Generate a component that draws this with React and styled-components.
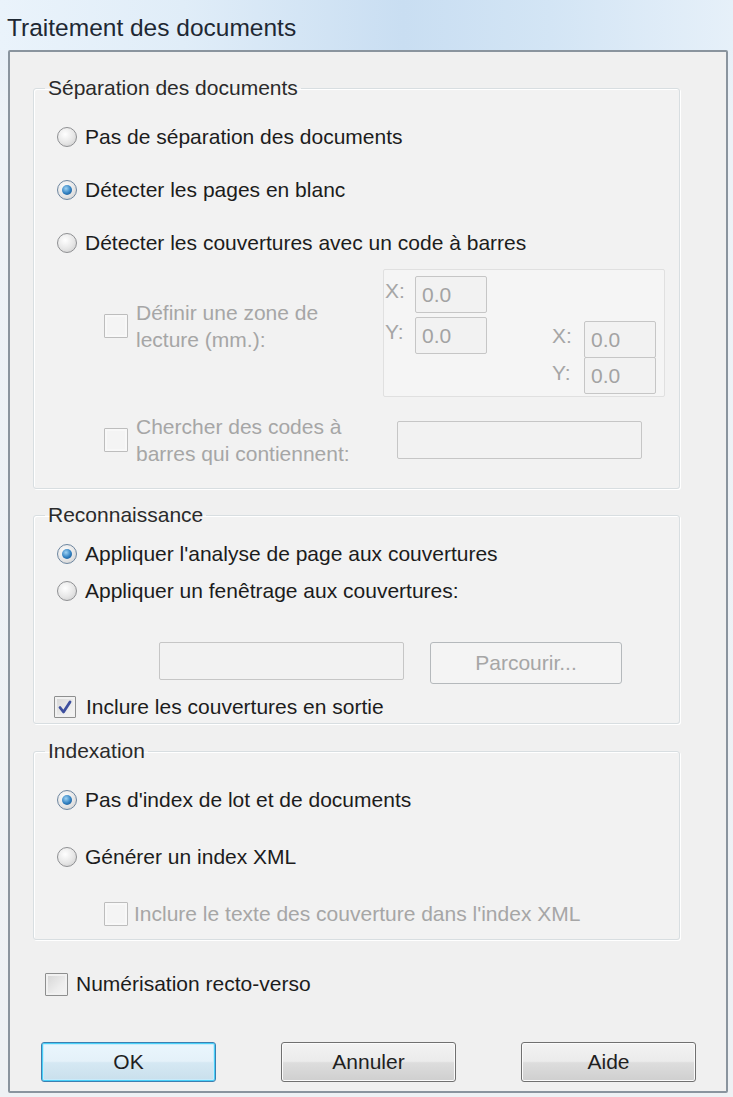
import React from 'react';
import styled, { createGlobalStyle, css } from 'styled-components';

const GlobalStyle = createGlobalStyle`
  html, body { margin: 0; padding: 0; }
  body {
    background: #eaf0f6;
    font-family: "Liberation Sans", Arial, sans-serif;
    color: #1c1c1c;
  }
`;

const Dialog = () => {
    return (
        <Window>
            <GlobalStyle />
            <TitleBar>Traitement des documents</TitleBar>
            <Frame>
                <Group>
                    <Legend>Séparation des documents</Legend>
                    <Rows $top={10}>
                        <OptionRow $h={53}>
                            <Radio />
                            <Label>Pas de séparation des documents</Label>
                        </OptionRow>
                        <OptionRow $h={53}>
                            <Radio $on />
                            <Label>Détecter les pages en blanc</Label>
                        </OptionRow>
                        <OptionRow $h={53}>
                            <Radio />
                            <Label>Détecter les couvertures avec un code à barres</Label>
                        </OptionRow>
                    </Rows>
                    <SubRow $h={128}>
                        <CheckItem $top={30}>
                            <Check $off />
                            <Label $off $multi>Définir une zone de<br />lecture (mm.):</Label>
                        </CheckItem>
                        <CoordBox>
                            <CoordGrid $gap={4}>
                                <CoordLabel>X:</CoordLabel>
                                <SmallInput>0.0</SmallInput>
                                <CoordLabel>Y:</CoordLabel>
                                <SmallInput>0.0</SmallInput>
                            </CoordGrid>
                            <CoordGrid $end $labelW={32}>
                                <CoordLabel>X:</CoordLabel>
                                <SmallInput>0.0</SmallInput>
                                <CoordLabel>Y:</CoordLabel>
                                <SmallInput $joined>0.0</SmallInput>
                            </CoordGrid>
                        </CoordBox>
                    </SubRow>
                    <SubRow $h={38} $mt={24} $center $pb={29}>
                        <CheckItem>
                            <Check $off />
                            <Label $off $multi>Chercher des codes à<br />barres qui contiennent:</Label>
                        </CheckItem>
                        <TextBox $w={245} $ml={14} />
                    </SubRow>
                </Group>

                <Group $mt={14}>
                    <Legend>Reconnaissance</Legend>
                    <Rows $top={8}>
                        <OptionRow $h={37}>
                            <Radio $on />
                            <Label>Appliquer l'analyse de page aux couvertures</Label>
                        </OptionRow>
                        <OptionRow $h={37}>
                            <Radio />
                            <Label>Appliquer un fenêtrage aux couvertures:</Label>
                        </OptionRow>
                    </Rows>
                    <BrowseRow>
                        <TextBox $w={245} />
                        <DisabledButton>Parcourir...</DisabledButton>
                    </BrowseRow>
                    <OptionRow $h={26} $mt={10} $ml={20} $pb={3}>
                        <Check $checked>
                            <svg width="16" height="16" viewBox="0 0 16 16">
                                <path d="M3 8.5 L6.5 13 L13 3" fill="none" stroke="#3d4f9e" strokeWidth="2.8" strokeLinecap="round" strokeLinejoin="round" />
                            </svg>
                        </Check>
                        <Label $gap={10}>Inclure les couvertures en sortie</Label>
                    </OptionRow>
                </Group>

                <Group $mt={15}>
                    <Legend>Indexation</Legend>
                    <Rows $top={8}>
                        <OptionRow $h={57}>
                            <Radio $on />
                            <Label>Pas d'index de lot et de documents</Label>
                        </OptionRow>
                        <OptionRow $h={57}>
                            <Radio />
                            <Label>Générer un index XML</Label>
                        </OptionRow>
                    </Rows>
                    <OptionRow $h={30} $mt={14} $ml={70} $pb={10}>
                        <Check $off />
                        <Label $off $gap={6}>Inclure le texte des couverture dans l'index XML</Label>
                    </OptionRow>
                </Group>

                <OptionRow $h={26} $mt={31} $ml={12}>
                    <Check $size={23} />
                    <Label $gap={8}>Numérisation recto-verso</Label>
                </OptionRow>

                <ButtonBar>
                    <Button $primary>OK</Button>
                    <Button>Annuler</Button>
                    <Button>Aide</Button>
                </ButtonBar>
            </Frame>
        </Window>
    );
};

const Window = styled.div`
    width: 733px;
    height: 1097px;
    display: flex;
    flex-direction: column;
    background: linear-gradient(180deg, #e4eef8 0px, #edf2f7 120px, #eef1f4 100%);
`;

const TitleBar = styled.div`
    height: 50px;
    box-sizing: border-box;
    padding: 5px 0 0 7px;
    display: flex;
    align-items: center;
    font-size: 24.5px;
    line-height: 24px;
    color: #1e2833;
    background: linear-gradient(90deg, #eaf3fb 0%, #e0edf8 25%, #c9def2 55%, #d3e5f5 75%, #e6f0f9 100%);
`;

const Frame = styled.div`
    margin-left: 8px;
    width: 720px;
    height: 1043px;
    box-sizing: border-box;
    border: 2px solid #8a949e;
    border-radius: 2px;
    background: #f0f0f0;
    padding: 24px 0 0 23px;
    display: flex;
    flex-direction: column;
`;

const Group = styled.fieldset`
    width: 647px;
    box-sizing: border-box;
    margin: ${p => p.$mt || 0}px 0 0 0;
    padding: 0;
    min-width: 0;
    border: 1px solid #d8dee1;
    border-radius: 3px;
    background: #f2f2f2;
    box-shadow: inset 1px 1px 0 #ffffff, 1px 1px 0 #ffffff;
    display: flex;
    flex-direction: column;
`;

const Legend = styled.legend`
    margin-left: 11px;
    padding: 0 3px;
    font-size: 21px;
    line-height: 24px;
    color: #2b2b2b;
`;

const Rows = styled.div`
    padding-top: ${p => p.$top}px;
    display: flex;
    flex-direction: column;
`;

const OptionRow = styled.div`
    height: ${p => p.$h}px;
    margin: ${p => p.$mt || 0}px 0 ${p => p.$pb || 0}px ${p => (p.$ml === undefined ? 23 : p.$ml)}px;
    display: flex;
    align-items: center;
`;

const Label = styled.span`
    margin-left: ${p => p.$gap || 8}px;
    font-size: 21px;
    line-height: ${p => (p.$multi ? 27 : 24)}px;
    color: ${p => (p.$off ? '#a6a6a6' : '#1c1c1c')};
    white-space: nowrap;
`;

const Radio = styled.span`
    position: relative;
    flex: none;
    width: 20px;
    height: 20px;
    box-sizing: border-box;
    border-radius: 50%;
    border: 1px solid #8f9093;
    background: radial-gradient(circle at 40% 35%, #ffffff 0%, #e6e6e6 55%, #c8c8c8 100%);
    ${p => p.$on && css`
        border-color: #6d86a0;
        &::after {
            content: '';
            position: absolute;
            left: 4px;
            top: 4px;
            width: 10px;
            height: 10px;
            border-radius: 50%;
            background: radial-gradient(circle at 40% 35%, #9fd3f4 0%, #2f7fc0 55%, #1b4a7c 100%);
        }
    `}
`;

const Check = styled.span`
    flex: none;
    width: ${p => p.$size || (p.$off ? 24 : 22)}px;
    height: ${p => p.$size || (p.$off ? 24 : 22)}px;
    box-sizing: border-box;
    border: 1px solid ${p => (p.$off ? '#bdbdbd' : '#8e8f8f')};
    border-radius: 1px;
    display: flex;
    align-items: center;
    justify-content: center;
    background: ${p => (p.$off
        ? '#f4f4f4'
        : 'linear-gradient(135deg, #d4d4d4 0%, #ececec 60%, #f6f6f6 100%)')};
    box-shadow: inset 0 0 0 2px ${p => (p.$off ? '#f8f8f8' : '#f1f1f1')};
`;

const SubRow = styled.div`
    height: ${p => p.$h}px;
    margin: ${p => p.$mt || 0}px 0 ${p => p.$pb || 0}px 70px;
    display: flex;
    align-items: ${p => (p.$center ? 'center' : 'flex-start')};
`;

const CheckItem = styled.div`
    width: 279px;
    flex: none;
    margin-top: ${p => p.$top || 0}px;
    display: flex;
    align-items: center;
`;

const CoordBox = styled.div`
    width: 282px;
    height: 128px;
    box-sizing: border-box;
    border: 1px solid #e0e0e0;
    border-radius: 2px;
    background: #f5f5f5;
    padding: 6px 8px 2px 1px;
    display: flex;
    justify-content: space-between;
`;

const CoordGrid = styled.div`
    display: grid;
    grid-template-columns: ${p => p.$labelW || 30}px 72px;
    row-gap: ${p => p.$gap || 0}px;
    align-self: ${p => (p.$end ? 'flex-end' : 'flex-start')};
`;

const CoordLabel = styled.span`
    font-size: 21px;
    line-height: 30px;
    color: #a6a6a6;
`;

const SmallInput = styled.div`
    height: 37px;
    box-sizing: border-box;
    border: 1px solid #c6c6c6;
    border-radius: 2px;
    background: #f2f2f2;
    padding-left: 6px;
    font-size: 21px;
    line-height: 35px;
    color: #a3a3a3;
    margin-top: ${p => (p.$joined ? -1 : 0)}px;
`;

const TextBox = styled.div`
    width: ${p => p.$w}px;
    height: 38px;
    margin-left: ${p => p.$ml || 0}px;
    box-sizing: border-box;
    border: 1px solid #c6c6c6;
    border-radius: 2px;
    background: #f2f2f2;
`;

const BrowseRow = styled.div`
    height: 42px;
    margin: 33px 0 0 125px;
    display: flex;
    align-items: flex-start;
    gap: 26px;
`;

const DisabledButton = styled.div`
    width: 192px;
    height: 42px;
    box-sizing: border-box;
    border: 1px solid #b5b9bc;
    border-radius: 3px;
    background: #f4f4f4;
    display: flex;
    align-items: center;
    justify-content: center;
    font-size: 21px;
    color: #a6a6a6;
`;

const ButtonBar = styled.div`
    margin: 45px 0 0 8px;
    display: flex;
    gap: 65px;
`;

const Button = styled.div`
    width: 175px;
    height: 40px;
    box-sizing: border-box;
    border: 1px solid #707070;
    border-radius: 3px;
    background: linear-gradient(180deg, #f3f3f3 0%, #ebebeb 48%, #dddddd 52%, #cfcfcf 100%);
    box-shadow: inset 0 0 0 1px #fbfbfb;
    display: flex;
    align-items: center;
    justify-content: center;
    font-size: 21px;
    color: #1f1f1f;
    ${p => p.$primary && css`
        border-color: #3c7fb1;
        box-shadow: inset 0 0 0 1px #48d0f8, inset 0 0 0 2px #c8ebfb;
        background: linear-gradient(180deg, #eaf6fd 0%, #e4f1f9 48%, #d5e8f3 52%, #c9dfec 100%);
    `}
`;

export default Dialog;
